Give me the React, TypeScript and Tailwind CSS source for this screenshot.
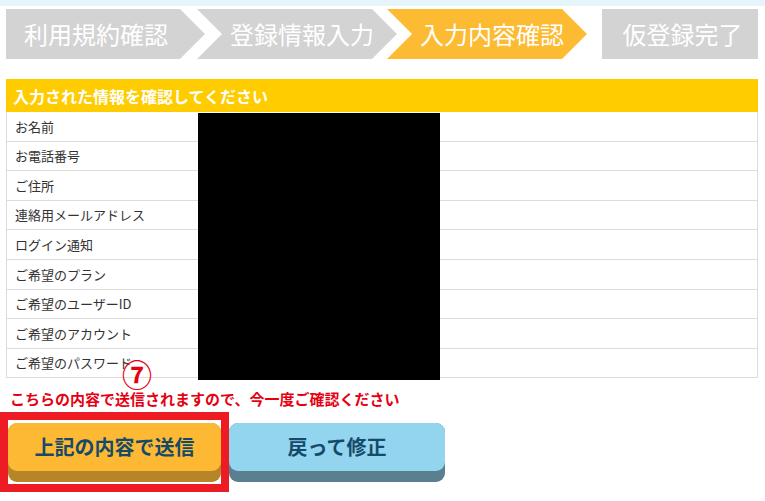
import * as React from 'react';

const rows = [
    'お名前',
    'お電話番号',
    'ご住所',
    '連絡用メールアドレス',
    'ログイン通知',
    'ご希望のプラン',
    'ご希望のユーザーID',
    'ご希望のアカウント',
    'ご希望のパスワード',
];

const arrowFirst = 'polygon(0 0, 174px 0, 199px 50%, 174px 100%, 0 100%)';
const arrowMid = 'polygon(0 0, 175px 0, 200px 50%, 175px 100%, 0 100%, 25px 50%)';

function Steps() {
    return (
        <div className="ml-[6px] mt-[3px] flex h-[50px] text-[24px] leading-none text-white">
            <div
                className="flex w-[199px] items-center bg-[#d3d3d3] pl-[18px]"
                style={{ clipPath: arrowFirst }}
            >
                利用規約確認
            </div>
            <div
                className="-ml-[8px] flex w-[200px] items-center bg-[#d3d3d3] pl-[33px]"
                style={{ clipPath: arrowMid }}
            >
                登録情報入力
            </div>
            <div
                className="-ml-[10px] flex w-[200px] items-center bg-[#fdba33] pl-[33px]"
                style={{ clipPath: arrowMid }}
            >
                入力内容確認
            </div>
            <div className="ml-[15px] flex w-[156px] items-center justify-center bg-[#d3d3d3] pl-[5px]">
                仮登録完了
            </div>
        </div>
    );
}

export default function App() {
    return (
        <div className="relative h-[501px] w-[765px] overflow-hidden bg-white font-['Noto_Sans_CJK_JP',sans-serif]">
            <div className="h-[6px] bg-[#e6f5fc]" />
            <Steps />

            <div className="ml-[6px] mt-[20px] w-[752px]">
                <div className="flex h-[33px] items-center bg-[#ffcc00] pl-[7px] text-[16px] font-bold text-white">
                    入力された情報を確認してください
                </div>
                <div className="border-x border-[#dcdcdc]">
                    {rows.map((label) => (
                        <div
                            key={label}
                            className="flex h-[29.6px] items-center border-b border-[#dcdcdc] pl-[8px] text-[13px] text-[#333]"
                        >
                            {label}
                        </div>
                    ))}
                </div>
            </div>

            <p className="mt-[13px] pl-[10px] text-[15px] font-bold leading-none text-[#e60012]">
                こちらの内容で送信されますので、今一度ご確認ください
            </p>

            <div className="mt-[6px] flex items-start">
                <div className="w-[229px] border-8 border-[#ed1c24] pb-[2px] pt-[3px]">
                    <div className="h-[59px] rounded-[9px] bg-[#b58527]">
                        <div className="flex h-[48px] items-center justify-center rounded-[9px] bg-[#fdb933] text-[20px] font-bold text-[#154a6a]">
                            上記の内容で送信
                        </div>
                    </div>
                </div>
                <div className="mt-[11px] h-[59px] w-[216px] rounded-[9px] bg-[#5a7f8e]">
                    <div className="flex h-[48px] items-center justify-center rounded-[9px] bg-[#93d4ee] text-[20px] font-bold text-[#154a6a]">
                        戻って修正
                    </div>
                </div>
            </div>

            {/* redaction + annotation overlays */}
            <div className="absolute left-[198px] top-[113px] h-[267px] w-[242px] bg-black" />
            <div className="absolute left-[122px] top-[358px] text-[30px] font-bold leading-none text-[#e60012]">
                ⑦
            </div>
        </div>
    );
}
